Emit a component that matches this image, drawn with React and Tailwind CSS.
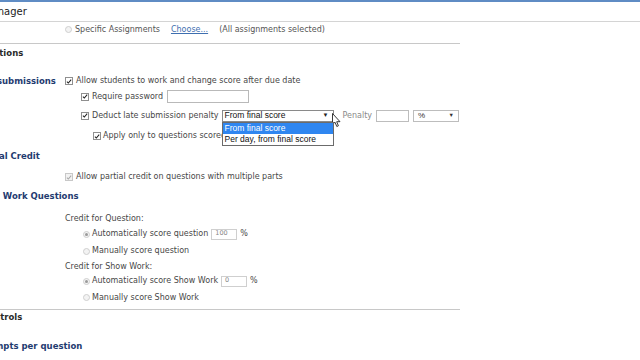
import React from "react";

const F = { fontFamily: '"DejaVu Sans", Verdana, sans-serif' };

function Check({ disabled }) {
  return (
    <span
      className={`inline-flex h-[8px] w-[8px] shrink-0 items-center justify-center border ${disabled ? "border-[#c8c8c8] bg-[#f2f2f2]" : "border-[#8f8f8f] bg-white"}`}
    >
      <svg viewBox="0 0 8 8" className="h-[7px] w-[7px]">
        <path d="M1.2 4.2 L3.1 6.1 L6.9 1.6" fill="none" stroke={disabled ? "#a8a8a8" : "#222"} strokeWidth="1.4" />
      </svg>
    </span>
  );
}

function Radio({ on }) {
  return (
    <span className="inline-flex h-[7px] w-[7px] shrink-0 items-center justify-center rounded-full border border-[#cfcfcf] bg-[#f3f3f3]">
      {on && <span className="h-[3px] w-[3px] rounded-full bg-[#9a9a9a]" />}
    </span>
  );
}

function Row({ h, children, label, labelShift = 0 }) {
  return (
    <div className="flex items-center" style={{ height: h }}>
      <div className="relative h-full w-[65px] shrink-0">
        {label && (
          <span
            className="absolute top-1/2 -translate-y-1/2 whitespace-nowrap text-[8.5px] font-bold text-[#1f3b70]"
            style={{ left: labelShift }}
          >
            {label}
          </span>
        )}
      </div>
      {children}
    </div>
  );
}

function Heading({ h, text, shift }) {
  return (
    <div className="relative" style={{ height: h }}>
      <span
        className="absolute top-1/2 -translate-y-1/2 whitespace-nowrap text-[8.5px] font-bold text-[#2a2a2a]"
        style={{ left: shift }}
      >
        {text}
      </span>
    </div>
  );
}

export default function App() {
  return (
    <div className="relative h-[360px] w-[640px] overflow-hidden bg-white text-[8px] text-[#474747]" style={F}>
      <div className="h-[2px] bg-[#5f8cc4]" />
      <div className="relative h-[20px] border-b border-[#d4d4d4]">
        <span className="absolute left-[-17px] top-[2px] whitespace-nowrap text-[10px] text-[#222]">Manager</span>
      </div>

      <Row h={15}>
        <div className="flex items-center gap-[3px]">
          <Radio />
          <span className="text-[#555]">Specific Assignments</span>
          <span className="ml-[8px] text-[#3f6fb0] underline">Choose...</span>
          <span className="ml-[8px] text-[#555]">(All assignments selected)</span>
        </div>
      </Row>
      <div className="h-[7px] w-[460px] border-b border-[#c8c8c8]" />

      <Heading h={18} text="Options" shift={-14} />

      <div className="h-[12px]" />
      <Row h={14} label="Late submissions" labelShift={-27}>
        <div className="flex items-center gap-[3px]">
          <Check />
          <span>Allow students to work and change score after due date</span>
        </div>
      </Row>
      <Row h={17}>
        <div className="ml-[16px] flex items-center gap-[3px]">
          <Check />
          <span>Require password</span>
          <span className="ml-[1px] h-[13px] w-[82px] border border-[#b9b9b9] bg-white" />
        </div>
      </Row>
      <div className="h-[2px]" />
      <Row h={17}>
        <div className="ml-[16px] flex items-center gap-[3px]">
          <Check />
          <span>Deduct late submission penalty</span>
          <div className="relative h-[12px] w-[112px]">
            <div
              className="flex h-full w-full items-center justify-between border border-[#8a8a8a] bg-white pl-[2px] pr-[4px] text-[8.5px] text-[#111]"
              style={{ fontFamily: '"Liberation Sans", Arial, sans-serif' }}
            >
              <span>From final score</span>
              <span className="text-[6px] text-[#222]">▼</span>
            </div>
            <div
              className="absolute left-0 top-[12px] z-10 w-[112px] border border-[#6b6b6b] bg-white text-[8.5px] text-[#111]"
              style={{ fontFamily: '"Liberation Sans", Arial, sans-serif' }}
            >
              <div className="flex h-[11px] items-center bg-[#2f86f0] pl-[2px] text-white">From final score</div>
              <div className="flex h-[11px] items-center pl-[2px]">Per day, from final score</div>
            </div>
          </div>
          <span className="ml-[6px] text-[#8a8a8a]">Penalty</span>
          <span className="ml-[1px] h-[12px] w-[33px] border border-[#bdbdbd] bg-white" />
          <div
            className="ml-[1px] flex h-[12px] w-[46px] items-center justify-between border border-[#bdbdbd] bg-white pl-[4px] pr-[4px] text-[8px] text-[#333]"
            style={{ fontFamily: '"Liberation Sans", Arial, sans-serif' }}
          >
            <span>%</span>
            <span className="text-[5.5px] text-[#333]">▼</span>
          </div>
        </div>
      </Row>
      <div className="h-[4px]" />
      <Row h={16}>
        <div className="ml-[28px] flex items-center gap-[2px]">
          <Check />
          <span>Apply only to questions scored</span>
        </div>
      </Row>

      <div className="h-[5px]" />
      <Row h={14} label="Partial Credit" labelShift={-24} />
      <div className="h-[7px]" />
      <Row h={14}>
        <div className="flex items-center gap-[3px]">
          <Check disabled />
          <span>Allow partial credit on questions with multiple parts</span>
        </div>
      </Row>
      <div className="h-[5px]" />
      <Row h={14} label="Show Work Questions" labelShift={-26} />
      <div className="h-[9px]" />
      <Row h={14}>
        <span>Credit for Question:</span>
      </Row>
      <Row h={16}>
        <div className="ml-[18px] flex items-center gap-[2px]">
          <Radio on />
          <span>Automatically score question</span>
          <span className="ml-[1px] flex h-[11px] w-[26px] items-center border border-[#cfcfcf] bg-white pl-[3px] text-[6.5px] text-[#888]">100</span>
          <span className="ml-[1px]">%</span>
        </div>
      </Row>
      <Row h={18}>
        <div className="ml-[18px] flex items-center gap-[2px]">
          <Radio />
          <span>Manually score question</span>
        </div>
      </Row>
      <Row h={13}>
        <span>Credit for Show Work:</span>
      </Row>
      <Row h={16}>
        <div className="ml-[18px] flex items-center gap-[2px]">
          <Radio on />
          <span>Automatically score Show Work</span>
          <span className="ml-[1px] flex h-[11px] w-[26px] items-center border border-[#cfcfcf] bg-white pl-[3px] text-[6.5px] text-[#888]">0</span>
          <span className="ml-[1px]">%</span>
        </div>
      </Row>
      <Row h={17}>
        <div className="ml-[18px] flex items-center gap-[2px]">
          <Radio />
          <span>Manually score Show Work</span>
        </div>
      </Row>
      <div className="h-[4px] w-[460px] border-b border-[#c8c8c8]" />
      <Heading h={14} text="Controls" shift={-18} />
      <div className="h-[15px]" />
      <Row h={14} label="Attempts per question" labelShift={-26} />

      <svg className="absolute left-[332px] top-[113px]" width="10" height="15" viewBox="0 0 10 15">
        <path d="M0.5 0.5 L0.5 11.5 L3 9.2 L4.8 13.5 L6.4 12.8 L4.7 8.7 L8 8.7 Z" fill="#fff" stroke="#222" strokeWidth="0.9" strokeLinejoin="round" />
      </svg>
    </div>
  );
}
